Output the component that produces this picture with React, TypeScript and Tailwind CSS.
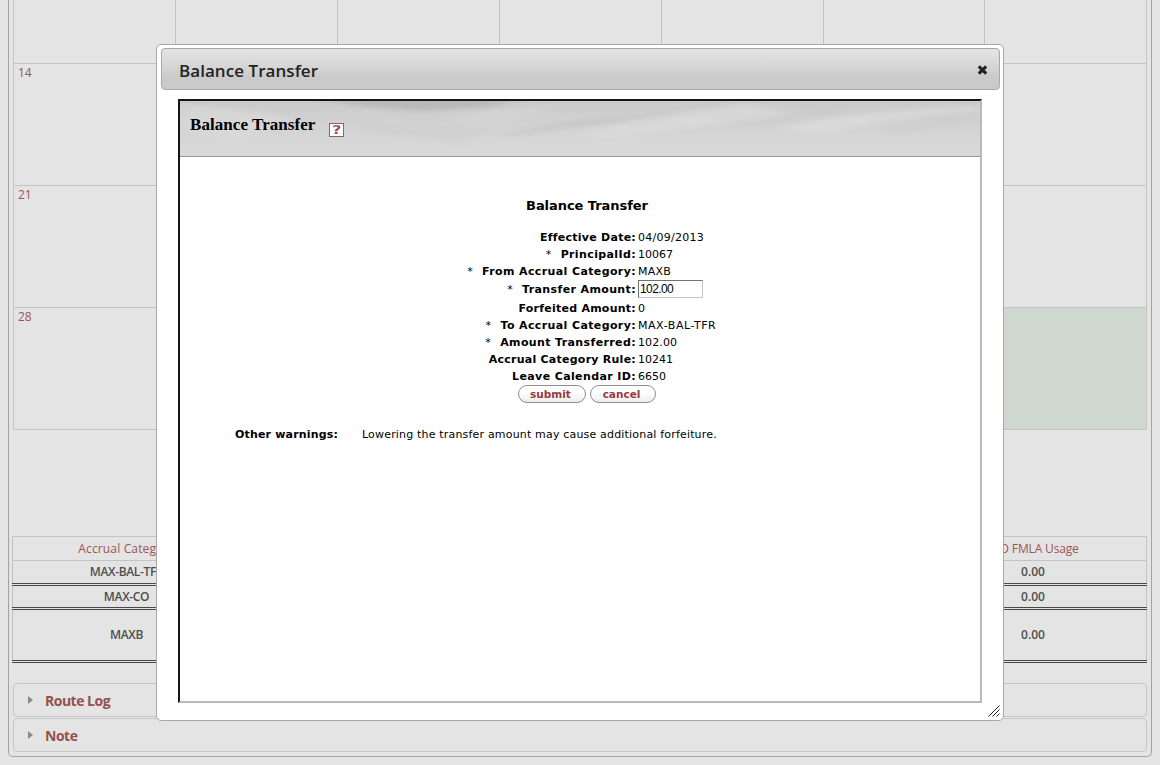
import React from 'react';

const columns = ['w-[162px]', 'w-[162px]', 'w-[162px]', 'w-[162px]', 'w-[162px]', 'w-[161px]', 'w-[162px]'];

const weeks = [
  { day: '', height: 'h-[64px]' },
  { day: '14', height: 'h-[122px]' },
  { day: '21', height: 'h-[122px]' },
  { day: '28', height: 'h-[122px]' },
];

const accruals = [
  { name: 'MAX-BAL-TFR', usage: '0.00', height: 'h-[25px]', pad: 'pb-px' },
  { name: 'MAX-CO', usage: '0.00', height: 'h-[24px]', pad: 'pt-px' },
  { name: 'MAXB', usage: '0.00', height: 'h-[53px]', pad: 'pb-px' },
];

const fields = [
  { label: 'Effective Date:', value: '04/09/2013', tracking: 'tracking-[0.25px]', labelTracking: 'tracking-[0.25px]', required: false, input: false },
  { label: 'PrincipalId:', value: '10067', tracking: 'tracking-normal', labelTracking: 'tracking-[0.38px]', required: true, input: false },
  { label: 'From Accrual Category:', value: 'MAXB', tracking: 'tracking-[0.2px]', labelTracking: 'tracking-[0.38px]', required: true, input: false },
  { label: 'Transfer Amount:', value: '102.00', tracking: 'tracking-normal', labelTracking: 'tracking-[0.38px]', required: true, input: true },
  { label: 'Forfeited Amount:', value: '0', tracking: 'tracking-normal', labelTracking: 'tracking-[0.25px]', required: false, input: false },
  { label: 'To Accrual Category:', value: 'MAX-BAL-TFR', tracking: 'tracking-[0.55px]', labelTracking: 'tracking-[0.38px]', required: true, input: false },
  { label: 'Amount Transferred:', value: '102.00', tracking: 'tracking-[0.1px]', labelTracking: 'tracking-[0.38px]', required: true, input: false },
  { label: 'Accrual Category Rule:', value: '10241', tracking: 'tracking-normal', labelTracking: 'tracking-[0.25px]', required: false, input: false },
  { label: 'Leave Calendar ID:', value: '6650', tracking: 'tracking-normal', labelTracking: 'tracking-[0.38px]', required: false, input: false },
];

function Calendar() {
  return (
    <div className="ml-[4px] w-[1134px] border-l border-[#c3c3c3]">
      {weeks.map((week, row) => (
        <div key={row} className={`flex ${week.height}`}>
          {columns.map((width, col) => (
            <div
              key={col}
              className={`${width} border-r border-b border-[#c3c3c3] pl-[4px] text-[12px] leading-[17px] text-[#9a5555] ${
                row === 3 && col === 6 ? 'bg-[#cfd8cf]' : ''
              }`}
            >
              {col === 0 ? week.day : ''}
            </div>
          ))}
        </div>
      ))}
    </div>
  );
}

function AccrualTable() {
  return (
    <div className="mt-[106px] ml-[3px] w-[1135px] text-[12px] leading-[16px]">
      <div className="flex h-[25px] items-center border border-[#c3c3c3] text-[#9a5555]">
        <div className="w-[227px] text-center tracking-[0.15px]">Accrual Category</div>
        <div className="flex-1" />
        <div className="w-[226px] text-center tracking-[-0.15px]">YTD FMLA Usage</div>
      </div>
      {accruals.map((row) => (
        <div key={row.name} className={`${row.height}`}>
          <div className="flex h-full flex-col">
            <div className={`flex flex-1 items-center border-x border-[#c3c3c3] font-semibold text-[#4e4e4e] ${row.pad}`}>
              <div className="w-[227px] text-center tracking-[-0.35px]">{row.name}</div>
              <div className="flex-1" />
              <div className="w-[226px] text-center">{row.usage}</div>
            </div>
            <div className="h-[3px] border-y border-[#484848]" />
          </div>
        </div>
      ))}
    </div>
  );
}

function AccordionItem({ title }: { title: string }) {
  return (
    <div className="ml-[4px] flex h-[34px] w-[1134px] items-center rounded-[4px] border border-[#c6c6c6] pl-[14px] text-[14px] font-bold text-[#955050]">
      <svg width="5" height="8" viewBox="0 0 5 8" className="mr-[12px]">
        <path d="M0 0 L5 4 L0 8Z" fill="#8a8a8a" />
      </svg>
      <span className="tracking-[-0.5px]">{title}</span>
    </div>
  );
}

function SkyTexture() {
  return (
    <svg width="801" height="55" viewBox="0 0 801 55" className="absolute inset-0" preserveAspectRatio="none">
      <defs>
        <linearGradient id="sky" x1="0" y1="0" x2="0" y2="1">
          <stop offset="0" stopColor="#cacaca" />
          <stop offset="0.35" stopColor="#d1d1d1" />
          <stop offset="0.75" stopColor="#d7d7d7" />
          <stop offset="1" stopColor="#d8d8d8" />
        </linearGradient>
        <filter id="haze" x="-10%" y="-60%" width="120%" height="220%">
          <feGaussianBlur stdDeviation="8 2" />
        </filter>
      </defs>
      <rect width="801" height="55" fill="url(#sky)" />
      <g filter="url(#haze)">
        <path d="M130 -4 L345 -4 L310 6 L240 10 L180 5Z" fill="#b4b4b4" opacity="0.75" />
        <path d="M0 4 Q60 7 110 18 L60 38 L0 30Z" fill="#dadada" opacity="0.6" />
        <path d="M160 18 Q220 28 320 26 L280 42 L190 32Z" fill="#cbcbcb" opacity="0.4" />
        <path d="M270 14 Q320 8 370 5 L350 16 L290 24Z" fill="#d6d6d6" opacity="0.6" />
        <path d="M310 38 Q370 18 440 15 Q520 6 570 -2 L540 6 Q440 25 390 27Z" fill="#c2c2c2" opacity="0.5" />
        <path d="M400 32 Q470 12 570 2 L610 14 Q540 22 430 38Z" fill="#dddddd" opacity="0.5" />
        <path d="M500 19 L525 19 L525 22 L500 22Z" fill="#e2e2e2" opacity="0.8" />
        <path d="M540 26 Q610 24 660 12 L740 0 L610 4 L610 15Z" fill="#cacaca" opacity="0.5" />
        <path d="M600 26 Q670 11 800 5 L800 10 Q700 16 640 34Z" fill="#e0e0e0" opacity="0.55" />
        <path d="M700 30 Q750 12 801 12 L801 20 Q760 24 720 34Z" fill="#cccccc" opacity="0.5" />
      </g>
    </svg>
  );
}

function PillButton({ label, width }: { label: string; width: string }) {
  return (
    <button
      className={`${width} h-[18px] rounded-[9px] border border-[#8f8f8f] bg-linear-to-b from-white from-40% to-[#ececec] pr-[3px] text-center text-[10.5px] leading-[15px] font-bold text-[#9a3a40]`}
    >
      {label}
    </button>
  );
}

function TransferForm() {
  return (
    <div className="font-['DejaVu_Sans',sans-serif] text-[11px] leading-[17px] text-black">
      <h2 className="mt-[40px] pl-[14px] text-center text-[13px] font-bold tracking-[-0.05px]">Balance Transfer</h2>
      <div className="mt-[15px]">
        {fields.map((field) => (
          <div key={field.label} className={`flex items-start ${field.input ? 'h-[20px]' : 'h-[17px]'}`}>
            <div className={`flex w-[456px] justify-end font-bold ${field.labelTracking} ${field.input ? 'pt-px' : ''}`}>
              {field.required && <span className="mr-[9px] font-normal">*</span>}
              <span>{field.label}</span>
            </div>
            {field.input ? (
              <input
                defaultValue={field.value}
                className="ml-[2px] h-[18px] w-[65px] border border-t-[#707070] border-r-[#c4c4c4] border-b-[#c4c4c4] border-l-[#707070] bg-white pl-px font-['Liberation_Sans',sans-serif] text-[12px] tracking-[-0.6px] outline-none"
              />
            ) : (
              <span className={`ml-[2px] ${field.tracking}`}>{field.value}</span>
            )}
          </div>
        ))}
      </div>
      <div className="ml-[338px] flex gap-[4px]">
        <PillButton label="submit" width="w-[68px]" />
        <PillButton label="cancel" width="w-[66px]" />
      </div>
      <div className="mt-[23px] flex pl-[55px]">
        <span className="w-[127px] font-bold tracking-[0.18px]">Other warnings:</span>
        <span className="tracking-[0.18px]">Lowering the transfer amount may cause additional forfeiture.</span>
      </div>
    </div>
  );
}

function Dialog() {
  return (
    <div className="absolute top-[44px] left-[156px] flex h-[677px] w-[848px] flex-col rounded-[5px] border border-[#a8a8a8] bg-white pt-[3px] pr-[3px] pl-[4px]">
      <div className="flex h-[42px] shrink-0 items-center justify-between rounded-[4px] border border-[#a8a8a8] bg-linear-to-b from-[#e3e3e3] from-5% via-[#d5d5d5] via-45% to-[#cacaca] to-70% pr-[11px] pl-[17px]">
        <span className="pt-[4px] text-[17px] font-semibold tracking-[0.05px] text-[#222222]">Balance Transfer</span>
        <svg width="11" height="10" viewBox="0 0 11 10" className="mt-px">
          <path d="M1.8 1.3 L9.2 8.7 M9.2 1.3 L1.8 8.7" stroke="#222" strokeWidth="3.1" strokeLinecap="butt" />
        </svg>
      </div>
      <div className="mt-[9px] ml-[17px] h-[604px] w-[804px] border-2 border-t-[#151515] border-r-[#b9b9b9] border-b-[#b9b9b9] border-l-[#151515] bg-white">
        <div className="relative h-[56px] overflow-hidden border-b border-[#969696]">
          <SkyTexture />
          <div className="relative flex pl-[10px]">
            <h1 className="w-[125px] pt-[13px] font-['Liberation_Serif',serif] text-[17px] leading-[22px] font-bold tracking-[0.06px] whitespace-nowrap text-black">
              Balance Transfer
            </h1>
            <span className="mt-[22px] ml-[14px] flex h-[14px] w-[15px] items-center justify-center border border-[#965f5f] bg-white">
              <span className="scale-x-125 font-['DejaVu_Sans',sans-serif] text-[13px] leading-[12px] font-bold text-[#8f5a55]">?</span>
            </span>
          </div>
        </div>
        <TransferForm />
      </div>
      <svg width="12" height="12" viewBox="0 0 12 12" className="absolute right-[3px] bottom-[3px]">
        <path d="M0.5 11.5 L11.5 0.5 M4.5 11.5 L11.5 4.5 M8.5 11.5 L11.5 8.5" stroke="#222" strokeWidth="1" />
      </svg>
    </div>
  );
}

export default function App() {
  return (
    <div className="relative h-[765px] w-[1160px] overflow-hidden bg-[#e4e4e4] font-['Open_Sans','Noto_Sans',sans-serif]">
      <div className="ml-[8px] h-[757px] w-[1144px] rounded-b-[5px] border border-t-0 border-[#a3a3a3]">
        <Calendar />
        <AccrualTable />
        <div className="mt-[20px] flex flex-col gap-px">
          <AccordionItem title="Route Log" />
          <AccordionItem title="Note" />
        </div>
      </div>
      <Dialog />
    </div>
  );
}
